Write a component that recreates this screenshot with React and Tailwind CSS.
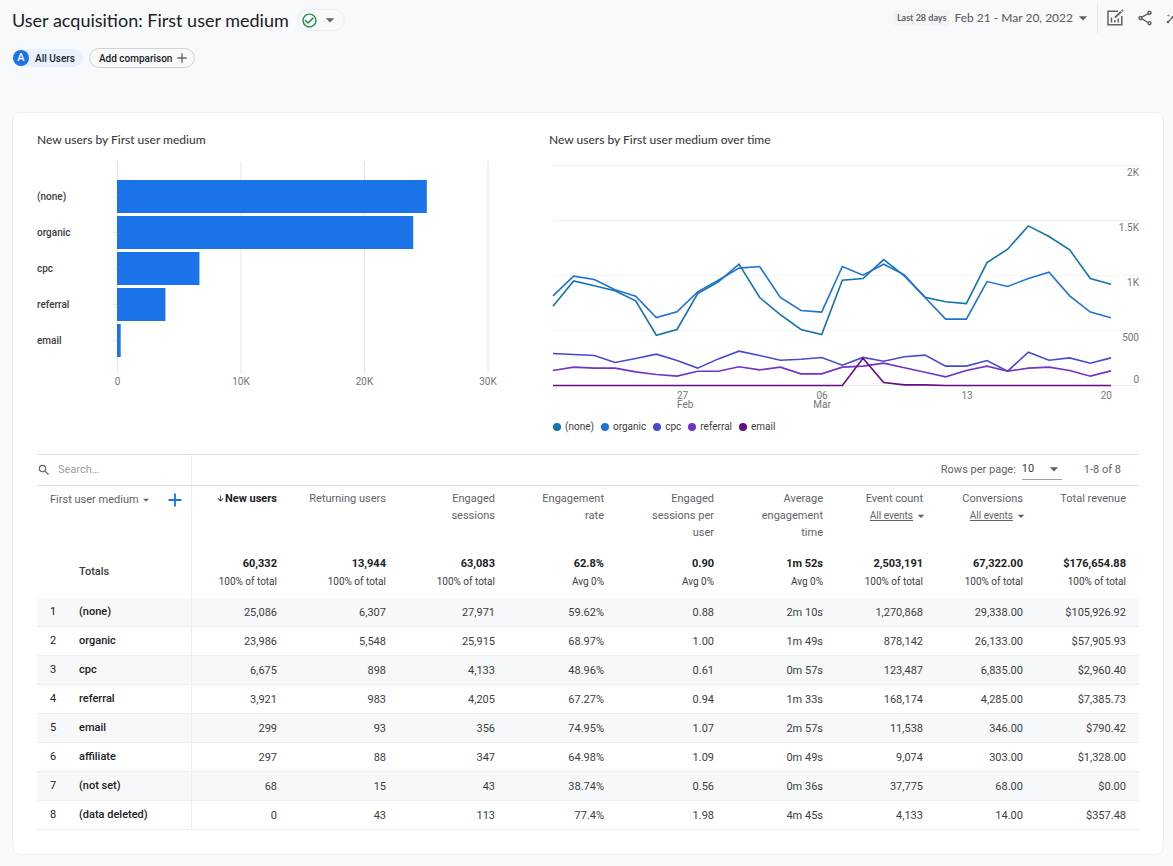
import { useState } from 'react';
import {
  MdAdd,
  MdArrowDownward,
  MdArrowDropDown,
  MdCheckCircleOutline,
  MdInsights,
  MdOutlineShare,
  MdSearch,
} from 'react-icons/md';

const BARS = [
  { label: '(none)', value: 25086 },
  { label: 'organic', value: 23986 },
  { label: 'cpc', value: 6675 },
  { label: 'referral', value: 3921 },
  { label: 'email', value: 299 },
];

const SERIES = [
  {
    label: '(none)',
    color: '#1274ac',
    values: [721, 951, 906, 861, 770, 457, 509, 836, 942, 1103, 800, 645, 509, 464, 957, 973, 1145, 997, 803, 761, 745, 1118, 1239, 1451, 1354, 1233, 973, 921],
  },
  {
    label: 'organic',
    color: '#1f73d8',
    values: [815, 994, 964, 870, 812, 618, 670, 851, 957, 1067, 1082, 800, 682, 667, 1082, 1003, 1103, 1006, 800, 603, 603, 945, 900, 973, 1030, 815, 667, 615],
  },
  {
    label: 'cpc',
    color: '#4a48cf',
    values: [291, 282, 273, 209, 245, 285, 227, 158, 242, 312, 273, 230, 239, 255, 185, 255, 221, 261, 276, 176, 176, 227, 130, 303, 230, 251, 203, 251],
  },
  {
    label: 'referral',
    color: '#7333c4',
    values: [136, 167, 158, 158, 124, 100, 85, 130, 130, 170, 142, 167, 106, 106, 167, 176, 203, 161, 121, 79, 136, 176, 130, 158, 167, 136, 85, 133],
  },
  {
    label: 'email',
    color: '#680a86',
    values: [0, 0, 0, 0, 0, 0, 0, 0, 0, 0, 0, 0, 0, 0, 0, 248, 27, 6, 6, 0, 0, 0, 0, 0, 0, 0, 0, 0],
  },
];

const COLUMNS = [
  { label: 'New users', total: '60,332', note: '100% of total', sorted: true },
  { label: 'Returning users', total: '13,944', note: '100% of total' },
  { label: 'Engaged sessions', total: '63,083', note: '100% of total', wrap: true },
  { label: 'Engagement rate', total: '62.8%', note: 'Avg 0%', wrap: true },
  { label: 'Engaged sessions per user', total: '0.90', note: 'Avg 0%', wrap: true },
  { label: 'Average engagement time', total: '1m 52s', note: 'Avg 0%', wrap: true },
  { label: 'Event count', total: '2,503,191', note: '100% of total', events: true },
  { label: 'Conversions', total: '67,322.00', note: '100% of total', events: true },
  { label: 'Total revenue', total: '$176,654.88', note: '100% of total' },
];

const ROWS = [
  ['(none)', '25,086', '6,307', '27,971', '59.62%', '0.88', '2m 10s', '1,270,868', '29,338.00', '$105,926.92'],
  ['organic', '23,986', '5,548', '25,915', '68.97%', '1.00', '1m 49s', '878,142', '26,133.00', '$57,905.93'],
  ['cpc', '6,675', '898', '4,133', '48.96%', '0.61', '0m 57s', '123,487', '6,835.00', '$2,960.40'],
  ['referral', '3,921', '983', '4,205', '67.27%', '0.94', '1m 33s', '168,174', '4,285.00', '$7,385.73'],
  ['email', '299', '93', '356', '74.95%', '1.07', '2m 57s', '11,538', '346.00', '$790.42'],
  ['affiliate', '297', '88', '347', '64.98%', '1.09', '0m 49s', '9,074', '303.00', '$1,328.00'],
  ['(not set)', '68', '15', '43', '38.74%', '0.56', '0m 36s', '37,775', '68.00', '$0.00'],
  ['(data deleted)', '0', '43', '113', '77.4%', '1.98', '4m 45s', '4,133', '14.00', '$357.48'],
];

function CustomizeIcon() {
  return (
    <svg viewBox="0 0 18 18" className="size-[18px]" fill="none" stroke="currentColor" strokeWidth="1.5">
      <path d="M12 2.2H2v13.600h13.800V7" />
      <path d="M5.5 8.500v5M8.900 11v2.500M12.300 9.500v4" />
      <path d="M9 8.500L15.200 2.600" strokeWidth="1.900" />
      <path d="M15.700 2.100L16.800 1" strokeWidth="2" />
    </svg>
  );
}

function Header() {
  return (
    <header className="flex h-10 items-center justify-between overflow-hidden pl-3">
      <div className="flex items-center gap-2">
        <h1 className="font-['Lato',sans-serif] text-[18px] leading-6 text-[#202124]">
          User acquisition: First user medium
        </h1>
        <button
          type="button"
          aria-label="Report status"
          className="flex h-[22px] items-center gap-0.5 rounded-full border border-[#eceef1] pr-1 pl-[3px]"
        >
          <MdCheckCircleOutline className="size-[17px] text-[#1e8e3e]" />
          <MdArrowDropDown className="size-5 text-[#5f6368]" />
        </button>
      </div>
      <div className="-mr-[9px] flex h-9 items-center self-start text-[#5f6368]">
        <button type="button" className="flex items-center gap-1 font-['Lato',sans-serif]">
          <span className="rounded-sm bg-[#f3f4f6] px-1 text-[9px] leading-4 font-bold">Last 28 days</span>
          <span className="text-xs font-medium">Feb 21 - Mar 20, 2022</span>
          <MdArrowDropDown className="-ml-1 size-5" />
        </button>
        <div className="ml-1 flex h-8 items-center gap-3 border-l border-[#e8eaed] pl-2">
          <button type="button" aria-label="Customize report">
            <CustomizeIcon />
          </button>
          <button type="button" aria-label="Share this report">
            <MdOutlineShare className="size-[18px]" />
          </button>
          <button type="button" aria-label="Insights">
            <MdInsights className="size-4" />
          </button>
        </div>
      </div>
    </header>
  );
}

function Comparisons() {
  return (
    <div className="flex h-9 items-center gap-1.5 pl-[13px] text-[10px] font-medium text-[#202124]">
      <button type="button" className="flex h-[18px] items-center gap-1.5 rounded-full bg-[#e8f0fe] pr-2">
        <span className="flex size-4 items-center justify-center rounded-full bg-[#1a73e8] text-[11px] text-white">
          A
        </span>
        All Users
      </button>
      <button
        type="button"
        className="flex h-5 items-center gap-0.5 rounded-full border border-[#d0d3d6] pr-1 pl-[9px]"
      >
        Add comparison
        <MdAdd className="size-4 text-[#5f6368]" />
      </button>
    </div>
  );
}

function BarChart() {
  const x = (v) => 80 + (v * 12.35) / 1000;
  return (
    <svg viewBox="0 0 512 230" role="img" aria-label="New users by First user medium" className="h-auto w-full">
      {[0, 10, 20, 30].map((k) => (
        <g key={k}>
          <line x1={x(k * 1000) + 0.5} x2={x(k * 1000) + 0.5} y1="1" y2="213" stroke="#e4e4e4" />
          <text x={x(k * 1000) + 0.5} y="225" textAnchor="middle" fontSize="10" fill="#757575">
            {k ? `${k}K` : '0'}
          </text>
        </g>
      ))}
      {BARS.map((b, i) => (
        <g key={b.label}>
          <line x1="76" x2="80" y1={36.5 + i * 36} y2={36.5 + i * 36} stroke="#e8eaed" />
          <rect x="80" y={20 + i * 36} width={x(b.value) - 80} height="33" fill="#1a73e8" />
          <text x="0" y={40 + i * 36} fontSize="10" fontWeight="500" fill="#3c4043">
            {b.label}
          </text>
        </g>
      ))}
    </svg>
  );
}

function LineChart() {
  const x = (i) => 4 + i * 20.667;
  const y = (v) => 225.5 - v * 0.11;
  return (
    <svg viewBox="0 0 590 252" role="img" aria-label="New users by First user medium over time" className="h-auto w-full">
      {[
        [2000, '2K', '#ededed'],
        [1500, '1.5K', '#ededed'],
        [1000, '1K', '#f4f4f4'],
        [500, '500', '#f4f4f4'],
        [0, '0', '#ededed'],
      ].map(([v, label, stroke]) => (
        <g key={label}>
          <line x1="4" x2={v ? 590 : 588} y1={y(v)} y2={y(v)} stroke={stroke} />
          <text x="590" y={v ? y(v) + 10 : y(v) - 3} textAnchor="end" fontSize="10" fill="#757575">
            {label}
          </text>
        </g>
      ))}
      {SERIES.map((s) => (
        <polyline
          key={s.label}
          points={s.values.map((v, i) => `${x(i)},${y(v)}`).join(' ')}
          fill="none"
          stroke={s.color}
          strokeWidth="1.6"
        />
      ))}
      <g fontSize="10" fill="#757575">
        <text x="128" y="239">27</text>
        <text x="128" y="248">Feb</text>
        <text x="273" y="239" textAnchor="middle">06</text>
        <text x="273" y="248" textAnchor="middle">Mar</text>
        <text x="418" y="239" textAnchor="middle">13</text>
        <text x="563" y="239" textAnchor="end">20</text>
      </g>
    </svg>
  );
}

function Charts() {
  return (
    <div className="grid grid-cols-[512fr_590fr] text-[#3c4043]">
      <section>
        <h2 className="mb-3 font-['Lato',sans-serif] text-xs font-medium">New users by First user medium</h2>
        <BarChart />
      </section>
      <section>
        <h2 className="mb-3 font-['Lato',sans-serif] text-xs font-medium">New users by First user medium over time</h2>
        <LineChart />
        <ul className="mt-2 flex gap-[7px] pt-px pl-1 text-[10px] leading-3">
          {SERIES.map((s) => (
            <li key={s.label} className="flex items-center gap-1">
              <span className="size-2 rounded-full" style={{ backgroundColor: s.color }} />
              {s.label}
            </li>
          ))}
        </ul>
      </section>
    </div>
  );
}

function Toolbar({ query, onQuery }) {
  return (
    <div className="flex h-8 border-y border-[#e0e0e0]">
      <div className="flex w-[155px] shrink-0 items-center border-r border-[#eceef0]">
        <label htmlFor="search" aria-label="Search" className="text-[#5f6368]">
          <MdSearch className="size-[14px]" />
        </label>
        <input
          id="search"
          type="text"
          value={query}
          onChange={(e) => onQuery(e.target.value)}
          placeholder="Search…"
          className="ml-[7px] w-full text-[11px] outline-none placeholder:text-[#9aa0a6]"
        />
      </div>
      <div className="flex flex-1 items-center justify-end text-[11px] text-[#5f6368]">
        <label htmlFor="rows">Rows per page:</label>
        <div className="relative ml-1.5 border-b border-[#9aa0a6]">
          <select id="rows" defaultValue="10" className="block h-[18px] w-10 appearance-none pb-0.5 text-[#3c4043] outline-none">
            <option>10</option>
            <option>25</option>
            <option>50</option>
          </select>
          <MdArrowDropDown className="pointer-events-none absolute -top-0.5 -right-0.5 size-5" />
        </div>
        <span className="mr-[18px] ml-[22px]">1-8 of 8</span>
      </div>
    </div>
  );
}

function ReportTable({ query }) {
  const rows = ROWS.map((row, i) => ({ row, n: i + 1 })).filter(({ row }) =>
    row[0].includes(query.trim().toLowerCase()),
  );
  return (
    <table className="w-full table-fixed border-separate border-spacing-0 text-right text-[11px] text-[#3c4043]">
      <colgroup>
        <col className="w-[155px]" />
        <col className="w-[98px]" />
        <col className="w-[109px]" />
        <col className="w-[109px]" />
        <col className="w-[109px]" />
        <col className="w-[110px]" />
        <col className="w-[109px]" />
        <col className="w-[100px]" />
        <col className="w-[100px]" />
        <col className="w-[103px]" />
      </colgroup>
      <thead>
        <tr className="h-16 align-top text-[#5f6368]">
          <th scope="col" className="border-r border-[#eceef0] pt-[3px] pr-[5px] pl-[13px] font-normal">
            <div className="flex items-center justify-between">
              <button type="button" className="flex items-center whitespace-nowrap">
                First user medium
                <MdArrowDropDown className="size-[14px]" />
              </button>
              <button type="button" aria-label="Add dimension" className="text-[#1a73e8]">
                <MdAdd className="size-[22px]" />
              </button>
            </div>
          </th>
          {COLUMNS.map((c) => (
            <th
              key={c.label}
              scope="col"
              className={`pt-1 pr-[13px] leading-[17px] ${c.sorted ? 'font-bold text-[#202124]' : 'font-normal'}`}
            >
              {c.sorted ? (
                <button type="button" className="inline-flex items-center">
                  <MdArrowDownward className="size-[9px]" />
                  {c.label}
                </button>
              ) : (
                <div className={c.wrap ? 'pl-8' : 'whitespace-nowrap'}>{c.label}</div>
              )}
              {c.events && (
                <button type="button" className="-mr-1.5 ml-auto flex items-center text-[10px] whitespace-nowrap">
                  <span className="underline">All events</span>
                  <MdArrowDropDown className="size-4" />
                </button>
              )}
            </th>
          ))}
        </tr>
      </thead>
      <tbody>
        <tr className="h-12">
          <th scope="row" className="border-r border-[#eceef0] pb-1 pl-[42px] text-left font-medium">
            Totals
          </th>
          {COLUMNS.map((c) => (
            <td key={c.label} className="pr-[13px] pb-0.5">
              <div className="leading-[18px] font-bold text-[#202124]">{c.total}</div>
              <div className="text-[10px] leading-[18px]">{c.note}</div>
            </td>
          ))}
        </tr>
        {rows.map(({ row, n }) => (
          <tr key={n} className="h-[29px] odd:bg-white even:bg-[#f7f8f9]">
            <th scope="row" className="border-r border-b border-[#eceef0] pl-[13px] text-left font-medium text-[#202124]">
              <span className="inline-block w-[29px] font-normal">{n}</span>
              {row[0]}
            </th>
            {row.slice(1).map((v, i) => (
              <td key={COLUMNS[i].label} className="border-b border-[#eceef0] pt-0.5 pr-[13px]">
                {v}
              </td>
            ))}
          </tr>
        ))}
      </tbody>
    </table>
  );
}

export default function App() {
  const [query, setQuery] = useState('');
  return (
    <div className="min-h-screen bg-[#f8f9fb] pb-2.5 font-['Roboto',sans-serif]">
      <Header />
      <Comparisons />
      <main className="mt-9 mr-[9px] ml-3 rounded-lg border border-[#eceef1] bg-white px-6 pt-[19px] pb-6">
        <Charts />
        <div className="mt-[21px]">
          <Toolbar query={query} onQuery={setQuery} />
          <ReportTable query={query} />
        </div>
      </main>
    </div>
  );
}
